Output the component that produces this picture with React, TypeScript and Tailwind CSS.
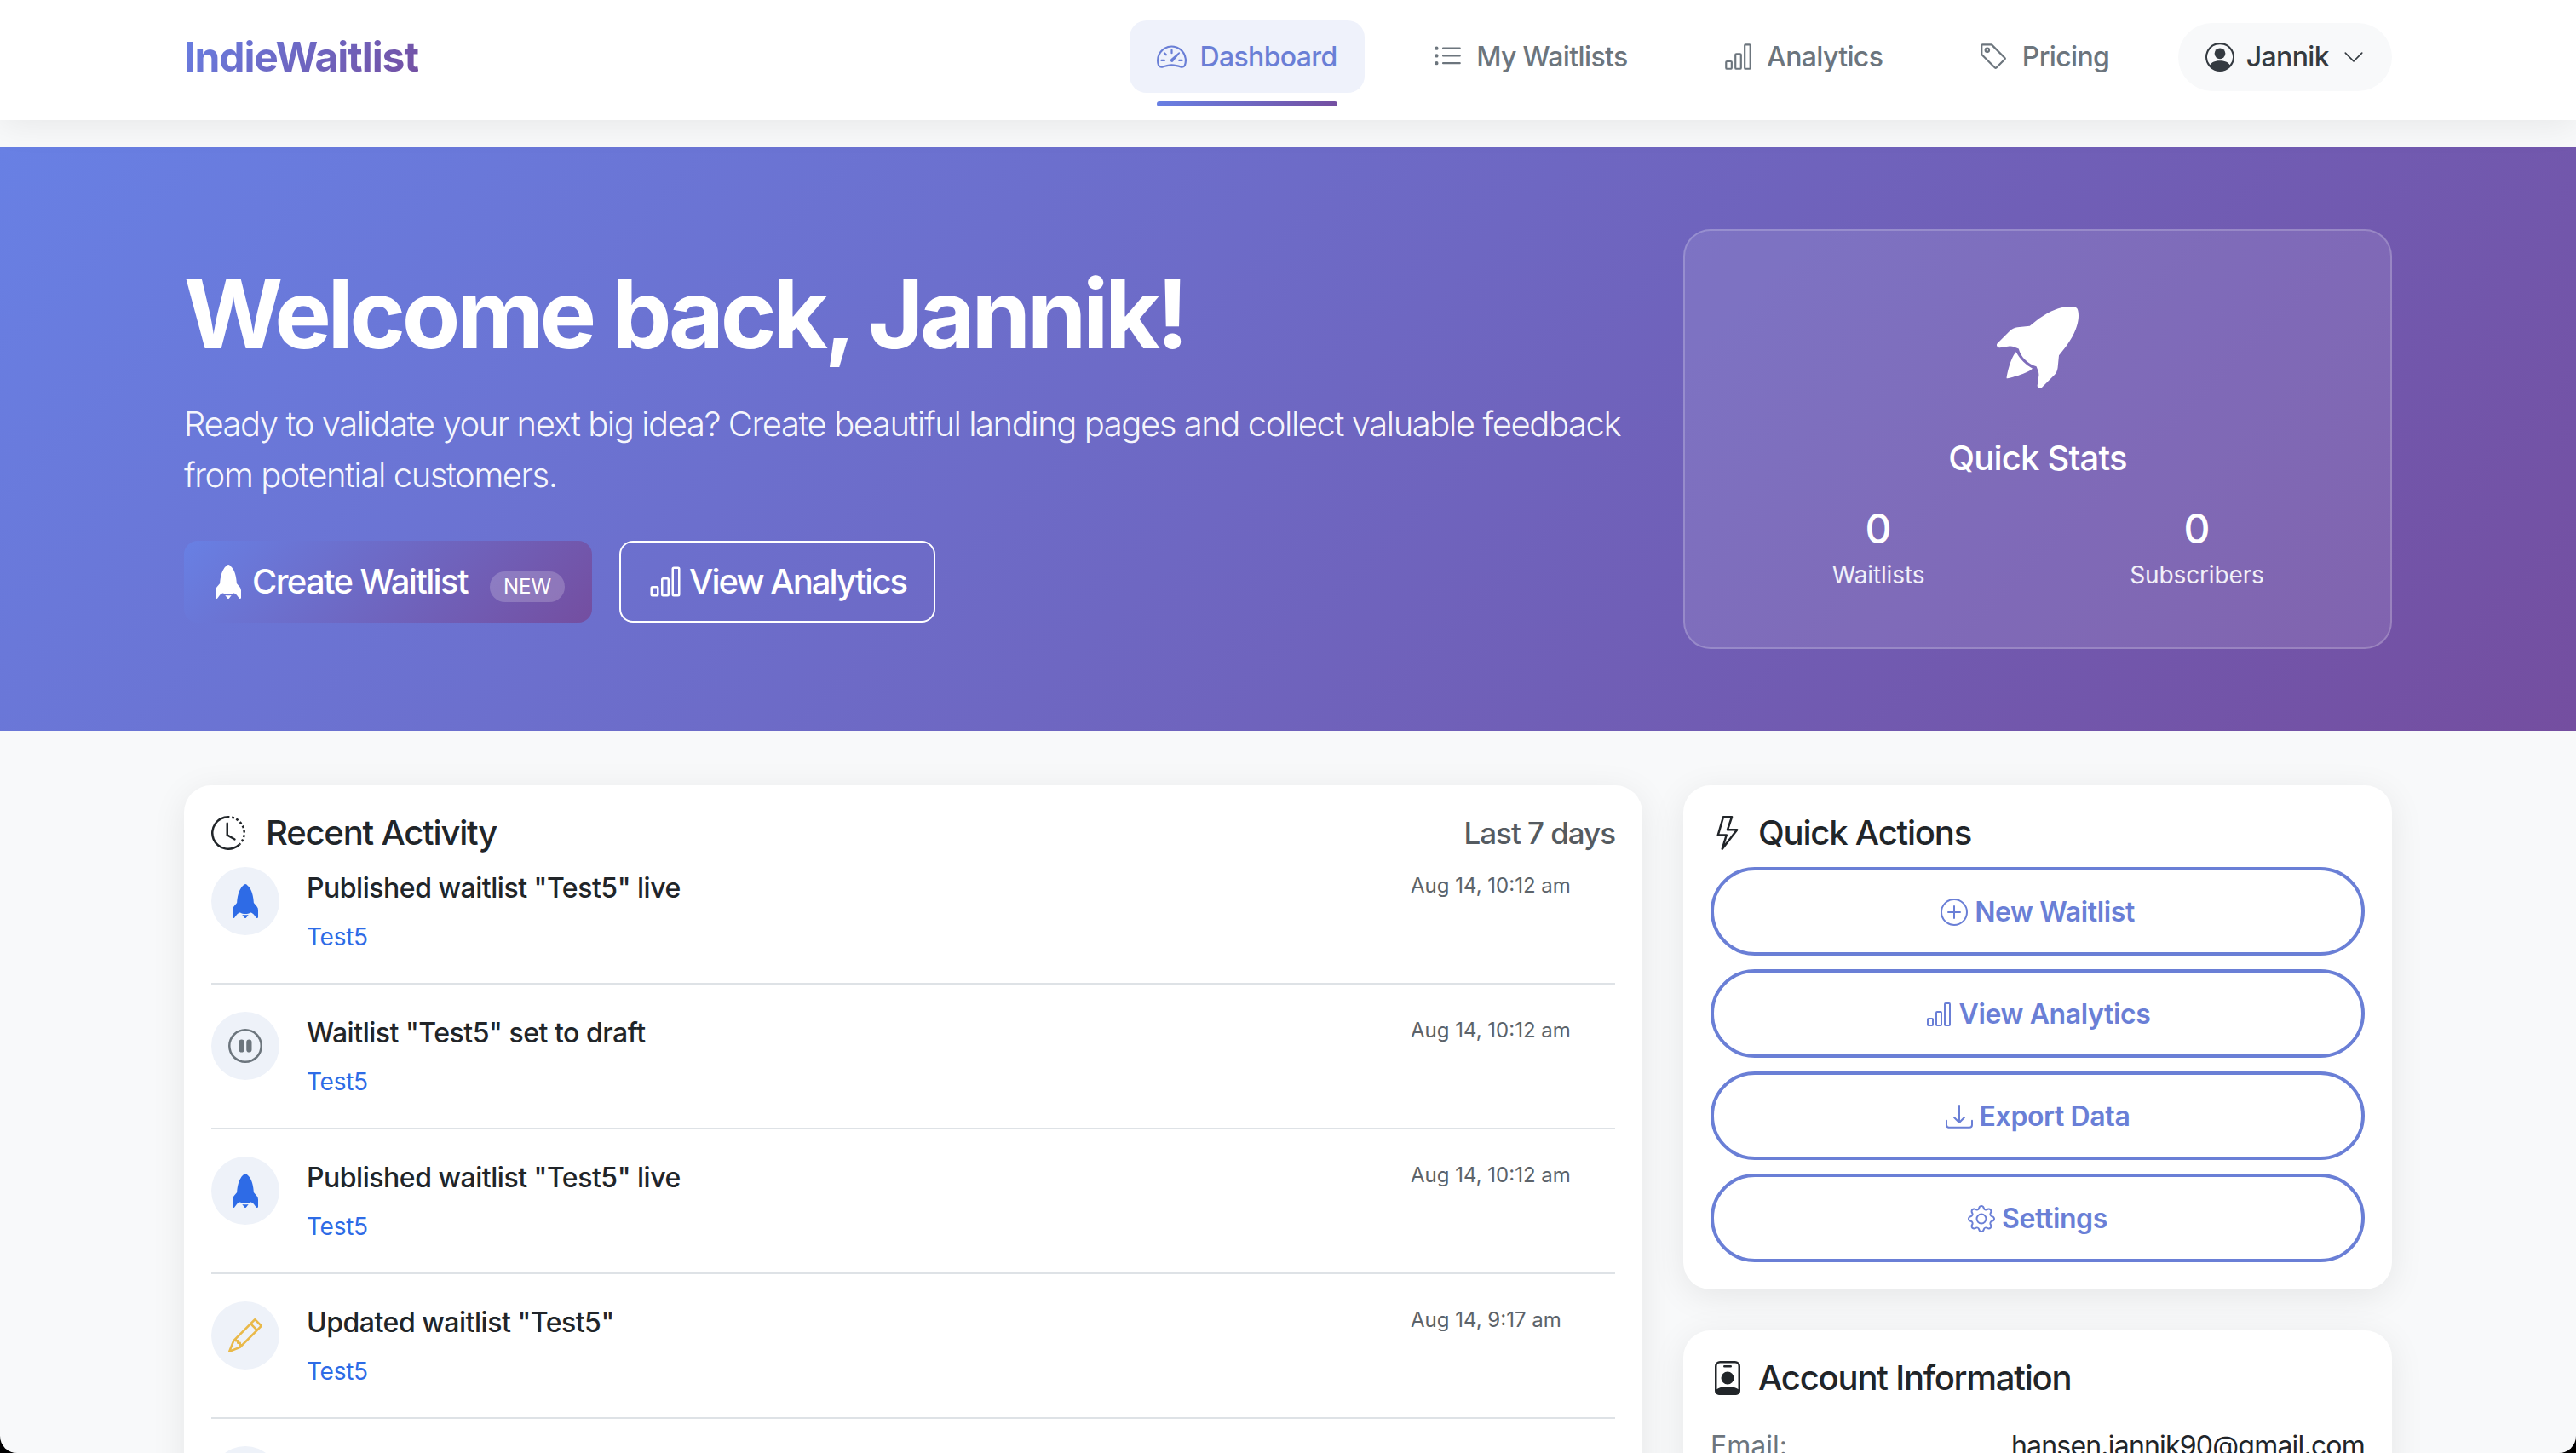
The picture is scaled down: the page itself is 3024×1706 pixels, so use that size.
import type { ReactNode } from 'react'
import {
  BsSpeedometer2,
  BsListUl,
  BsBarChart,
  BsTag,
  BsPersonCircle,
  BsChevronDown,
  BsClockHistory,
  BsPauseCircle,
  BsPencil,
  BsLightning,
  BsPlusCircle,
  BsDownload,
  BsGear,
  BsPersonBadge,
} from 'react-icons/bs'

// solid rocket, the package version has a window cut out of it
function Rocket({ size, className }: { size: number; className?: string }) {
  return (
    <svg width={size} height={size} viewBox="0 0 16 16" fill="currentColor" className={className}>
      <path d="M10.175 1.991c.81 1.312 1.583 3.43 1.778 6.819l1.5 1.83A2.5 2.5 0 0 1 14 12.202V15.5a.5.5 0 0 1-.9.3l-1.125-1.5c-.166-.222-.42-.4-.752-.57-.214-.108-.414-.192-.627-.282l-.196-.083C9.7 13.793 8.85 14 8 14s-1.7-.207-2.4-.635q-.098.042-.197.083c-.212.09-.413.174-.627.282-.332.17-.586.348-.752.57L2.9 15.8a.5.5 0 0 1-.9-.3v-3.298a2.5 2.5 0 0 1 .548-1.562l.004-.005L4.049 8.81c.197-3.323.969-5.434 1.774-6.756.466-.767.94-1.262 1.31-1.57a3.7 3.7 0 0 1 .601-.41A.55.55 0 0 1 8 0c.101 0 .17.027.25.064q.056.025.145.075c.118.066.277.167.463.315.373.297.85.779 1.317 1.537" />
      <path d="M8 14.5c.5 0 .999-.046 1.479-.139L8.4 15.8a.5.5 0 0 1-.8 0l-1.079-1.439c.48.093.98.139 1.479.139" />
    </svg>
  )
}

function RocketTakeoff({ size }: { size: number }) {
  return (
    <svg width={size} height={size} viewBox="0 0 16 16" fill="currentColor">
      <path d="M12.17 9.53c2.307-2.592 3.278-4.684 3.641-6.218.21-.887.214-1.58.16-2.065a3.6 3.6 0 0 0-.108-.563 2 2 0 0 0-.078-.23V.453c-.073-.164-.168-.234-.352-.295a2 2 0 0 0-.16-.045 4 4 0 0 0-.57-.093c-.49-.044-1.19-.03-2.08.188-1.536.374-3.618 1.343-6.161 3.604l-2.4.238h-.006a2.55 2.55 0 0 0-1.524.734L.15 7.17a.512.512 0 0 0 .433.868l1.896-.271c.28-.04.592.013.955.132.232.076.437.16.655.248l.203.083c.196.816.66 1.58 1.275 2.195.613.614 1.376 1.08 2.191 1.277l.082.202c.089.218.173.424.249.657.118.363.172.676.132.956l-.271 1.9a.512.512 0 0 0 .867.433l2.382-2.386c.41-.41.668-.949.732-1.526z" />
      <path d="M5.205 10.787a7.6 7.6 0 0 0 1.804 1.352c-1.118 1.007-4.929 2.028-5.054 1.903-.126-.127.737-4.189 1.839-5.18.346.69.837 1.35 1.411 1.925" />
    </svg>
  )
}

const navLinks = [
  { label: 'Dashboard', icon: <BsSpeedometer2 size={35} />, active: true },
  { label: 'My Waitlists', icon: <BsListUl size={35} />, active: false },
  { label: 'Analytics', icon: <BsBarChart size={35} />, active: false },
  { label: 'Pricing', icon: <BsTag size={35} />, active: false },
]

const activity = [
  { title: 'Published waitlist "Test5" live', time: 'Aug 14, 10:12 am', icon: <Rocket size={40} className="text-[#2e6be6]" /> },
  { title: 'Waitlist "Test5" set to draft', time: 'Aug 14, 10:12 am', icon: <BsPauseCircle size={40} className="text-[#6c757d]" /> },
  { title: 'Published waitlist "Test5" live', time: 'Aug 14, 10:12 am', icon: <Rocket size={40} className="text-[#2e6be6]" /> },
  { title: 'Updated waitlist "Test5"', time: 'Aug 14, 9:17 am', icon: <BsPencil size={40} className="text-[#e9b949]" /> },
]

const actions = [
  { label: 'New Waitlist', icon: <BsPlusCircle size={32} /> },
  { label: 'View Analytics', icon: <BsBarChart size={32} /> },
  { label: 'Export Data', icon: <BsDownload size={32} /> },
  { label: 'Settings', icon: <BsGear size={32} /> },
]

function Card({ children }: { children: ReactNode }) {
  return <div className="bg-white rounded-[32px] p-[32px] shadow-[0_8px_40px_rgba(0,0,0,0.08)]">{children}</div>
}

function CardTitle({ icon, children }: { icon: ReactNode; children: ReactNode }) {
  return (
    <h2 className="flex items-center gap-[16px] h-[48px] text-[40px] font-medium leading-[48px] tracking-[-0.03em] text-[#212529]">
      {icon}
      {children}
    </h2>
  )
}

export default function App() {
  return (
    <div className="h-[1706px] bg-black font-[Inter,sans-serif]">
      <div className="h-[1706px] overflow-hidden rounded-b-[20px] bg-[#f8f9fa]">
        {/* Navbar */}
        <nav className="relative h-[141px] bg-white pb-[8px] shadow-[0_4px_40px_rgba(0,0,0,0.08)]">
          <div className="mx-auto flex h-full w-[2592px] items-center justify-between">
            <span className="bg-[linear-gradient(135deg,#6880e4_0%,#744ea0_100%)] bg-clip-text text-[48px] font-bold tracking-[-0.0225em] text-transparent">
              IndieWaitlist
            </span>
            <div className="flex items-center gap-[48.5px]">
              {navLinks.map((link) => (
                <a
                  key={link.label}
                  className={`relative flex h-[85px] items-center gap-[16px] rounded-[20px] px-[32px] text-[32px] font-medium tracking-[-0.02em] ${
                    link.active ? 'bg-[#eff2fb] text-[#6a7fd6]' : 'text-[#6c757d]'
                  }`}
                >
                  {link.icon}
                  {link.label}
                  {link.active && (
                    <span className="absolute -bottom-[16px] left-[32px] right-[32px] h-[6px] rounded-full bg-[linear-gradient(135deg,#6880e4_0%,#744ea0_100%)]" />
                  )}
                </a>
              ))}
              <button className="flex h-[80px] items-center gap-[14px] rounded-full bg-[#f8f9fa] px-[32px] text-[32px] font-medium tracking-[-0.02em] text-[#343a40]">
                <BsPersonCircle size={34} />
                Jannik
                <BsChevronDown size={26} className="ml-[2px]" />
              </button>
            </div>
          </div>
        </nav>

        {/* Hero */}
        <section className="mt-[32px] h-[685px] bg-[linear-gradient(135deg,#6880e4_0%,#744ea0_100%)] py-[96px] text-white">
          <div className="mx-auto grid h-full w-[2592px] grid-cols-[1712px_832px] items-center gap-[48px]">
            <div>
              <h1 className="text-[112px] font-bold leading-[134px] tracking-[-0.04em]">Welcome back, Jannik!</h1>
              <p className="mt-[33px] text-[40px] font-[350] leading-[60px] tracking-[-0.036em] text-white/95">
                Ready to validate your next big idea? Create beautiful landing pages and collect valuable feedback from
                potential customers.
              </p>
              <div className="mt-[47px] flex gap-[32px]">
                <button className="flex h-[96px] items-center rounded-[16px] bg-[linear-gradient(135deg,#6880e4_0%,#744ea0_100%)] px-[32px] text-[40px] font-[450] tracking-[-0.0415em]">
                  <Rocket size={40} />
                  <span className="ml-[8px]">Create Waitlist</span>
                  <span className="ml-[26px] mt-[12px] rounded-full bg-white/20 px-[16px] text-[24px] font-normal leading-[36px] tracking-normal">NEW</span>
                </button>
                <button className="flex h-[96px] items-center rounded-[16px] border-2 border-white px-[32px] text-[40px] font-[450] tracking-[-0.049em]">
                  <BsBarChart size={40} />
                  <span className="ml-[8px]">View Analytics</span>
                </button>
              </div>
            </div>
            <div className="flex h-full flex-col items-center justify-center rounded-[32px] border-2 border-white/20 bg-white/10 px-[40px] pt-[24px]">
              <RocketTakeoff size={96} />
              <h3 className="mt-[58px] text-[40px] font-medium leading-[48px] tracking-[-0.02em]">Quick Stats</h3>
              <div className="mt-[30px] grid w-full grid-cols-2 text-center">
                <div>
                  <div className="text-[48px] font-medium leading-[58px]">0</div>
                  <div className="mt-[4px] text-[28px] leading-[42px] tracking-[-0.005em] text-white/90">Waitlists</div>
                </div>
                <div>
                  <div className="text-[48px] font-medium leading-[58px]">0</div>
                  <div className="mt-[4px] text-[28px] leading-[42px] tracking-[-0.005em] text-white/90">Subscribers</div>
                </div>
              </div>
            </div>
          </div>
        </section>

        {/* Main content */}
        <main className="mx-auto mt-[64px] grid w-[2592px] grid-cols-[1712px_832px] items-start gap-[48px]">
          <Card>
            <div className="flex items-center justify-between">
              <CardTitle icon={<BsClockHistory size={40} className="mr-[8px]" />}>Recent Activity</CardTitle>
              <span className="text-[35px] font-medium leading-[48px] tracking-[-0.03em] text-[#555b61]">Last 7 days</span>
            </div>
            <ul className="mt-[16px]">
              {activity.map((item) => (
                <li key={item.title + item.time} className="mb-[32px] flex h-[138px] items-start border-b-2 border-[#dee2e6]">
                  <div className="flex h-[80px] w-[80px] shrink-0 items-center justify-center rounded-full bg-[#eef2f9]">
                    {item.icon}
                  </div>
                  <div className="ml-[32px] flex-1 pt-[1px]">
                    <div className="text-[32px] font-medium leading-[48px] tracking-[-0.015em] text-[#212529]">{item.title}</div>
                    <a className="mt-[12px] block text-[28px] leading-[42px] tracking-[-0.01em] text-[#2e6be6]">Test5</a>
                  </div>
                  <div className="mt-[3px] w-[240px] text-[24px] leading-[38px] text-[#5c636a]">{item.time}</div>
                </li>
              ))}
              <li className="h-[80px] w-[80px] rounded-full bg-[#eef2f9]" />
            </ul>
          </Card>

          <div className="flex flex-col gap-[48px]">
            <Card>
              <CardTitle icon={<BsLightning size={40} />}>Quick Actions</CardTitle>
              <div className="mt-[16px] flex flex-col gap-[16px]">
                {actions.map((action) => (
                  <button
                    key={action.label}
                    className="flex h-[104px] items-center justify-center gap-[8px] rounded-full border-4 border-[#6a7fd6] pt-[1px] text-[32px] font-semibold tracking-[-0.012em] text-[#6a7fd6]"
                  >
                    {action.icon}
                    {action.label}
                  </button>
                ))}
              </div>
            </Card>
            <Card>
              <CardTitle icon={<BsPersonBadge size={40} />}>Account Information</CardTitle>
              <div className="mt-[32px] flex justify-between text-[32px] leading-[48px]">
                <span className="text-[#6c757d]">Email:</span>
                <span className="tracking-[-0.025em] text-[#212529]">hansen.jannik90@gmail.com</span>
              </div>
            </Card>
          </div>
        </main>
      </div>
    </div>
  )
}
